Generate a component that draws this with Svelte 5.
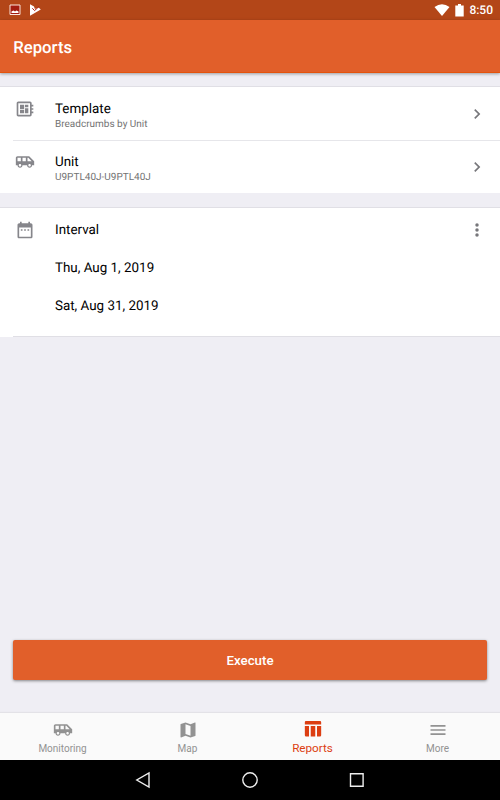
<script>
  const van = "M17 5H3c-1.1 0-2 .89-2 2v9h2c0 1.65 1.34 3 3 3s3-1.35 3-3h5.5c0 1.65 1.34 3 3 3s3-1.35 3-3H23v-5l-6-6zM3 11V7h4v4H3zm3 6.500c-.83 0-1.500-.67-1.500-1.500s.67-1.500 1.500-1.500 1.500.67 1.500 1.500-.67 1.500-1.500 1.500zm7-6.500H9V7h4v4zm4.500 6.500c-.83 0-1.500-.67-1.500-1.500s.67-1.500 1.500-1.500 1.500.67 1.500 1.500-.67 1.500-1.500 1.500zM15 11V7h1l4 4h-5z";
  const board = "M22 9V7h-2V5c0-1.1-.9-2-2-2H4c-1.1 0-2 .9-2 2v14c0 1.1.9 2 2 2h14c1.1 0 2-.9 2-2v-2h2v-2h-2v-2h2v-2h-2V9h2zm-4 10H4V5h14v14zM6 13h5v4H6zm6-6h4v3h-4zM6 7h5v5H6zm6 4h4v6h-4z";
  const calendar = "M9 11H7v2h2v-2zm4 0h-2v2h2v-2zm4 0h-2v2h2v-2zm2-7h-1V2h-2v2H8V2H6v2H5c-1.11 0-2 .9-2 2v14c0 1.1.89 2 2 2h14c1.1 0 2-.9 2-2V6c0-1.1-.9-2-2-2zm0 16H5V9h14v11z";

  const rows = [
    { title: "Template", value: "Breadcrumbs by Unit", icon: board },
    { title: "Unit", value: "U9PTL40J-U9PTL40J", icon: van },
  ];

  const dates = ["Thu, Aug 1, 2019", "Sat, Aug 31, 2019"];

  const tabs = [
    { label: "Monitoring", icon: van },
    { label: "Map", icon: "M20.5 3l-.16.03L15 5.1 9 3 3.36 4.9c-.21.07-.36.25-.36.48V20.5c0 .28.22.5.5.5l.16-.03L9 18.9l6 2.1 5.64-1.9c.21-.07.36-.25.36-.48V3.5c0-.28-.22-.5-.5-.5zM15 19l-6-2.11V5l6 2.11V19z" },
    { label: "Reports", icon: "M3.500 2.500h17q1.300 0 1.300 1.300V6.500H2.200V3.800q0-1.300 1.300-1.300zM2.200 8.500h5v12.500H3.700q-1.500 0-1.500-1.500zM9.300 8.500h5.400v12.500H9.300zM16.800 8.500h5v11q0 1.500-1.500 1.500h-3.500z" },
    { label: "More", icon: "M3 18h18v-2H3v2zm0-5h18v-2H3v2zm0-7v2h18V6H3z" },
  ];
  let active = $state("Reports");
</script>

<div class="screen">
  <div class="status">
    <svg class="photo" viewBox="0 0 12 12" width="12" height="12">
      <path d="M1 1h10v9.500H1z" fill="#a31c10" stroke="#fbe4dc" />
      <path d="M2.500 9V7.500l2-1 1.500 1L7.500 6.500l2 1V9z" fill="#fff" />
    </svg>
    <svg viewBox="0 0 12 12" width="12" height="12">
      <path d="M1 .3L5 2.500 5.800 5 9.500 3.500 11.800 5.500 1 11.700z" fill="#fff" />
      <path d="M3.300 4.300l2.300 2.300L10 2.500" fill="none" stroke="#b01c10" />
    </svg>
    <span class="space"></span>
    <svg class="wifi" viewBox="0 0 16 12" width="16" height="12">
      <path d="M.5 3Q8-2.500 15.500 3L8 12z" fill="#fff" />
    </svg>
    <svg class="battery" viewBox="0 0 9 13" width="9" height="13">
      <path d="M.3 1.500H3V0h3v1.500h2.700v11H.3z" fill="#fff" />
    </svg>
    <span class="time">8:50</span>
  </div>

  <header><h1>Reports</h1></header>

  <main>
    <section>
      {#each rows as row}
        <div class="row">
          <svg class="icon" viewBox="0 0 24 24"><path d={row.icon} /></svg>
          <div class="text">
            <div class="title">{row.title}</div>
            <div class="value">{row.value}</div>
          </div>
          <svg class="icon arrow" viewBox="0 0 24 24">
            <path d="M8.600 16.600L13.200 12 8.600 7.400 10 6l6 6-6 6z" />
          </svg>
        </div>
      {/each}
    </section>

    <section class="interval">
      <div class="line">
        <svg class="icon" viewBox="0 0 24 24"><path d={calendar} /></svg>
        <span class="title">Interval</span>
        <svg class="icon dots" viewBox="0 0 24 24">
          <circle cx="12" cy="6" r="2.100" />
          <circle cx="12" cy="12" r="2.100" />
          <circle cx="12" cy="18" r="2.100" />
        </svg>
      </div>
      {#each dates as date}
        <div class="line date">{date}</div>
      {/each}
      <div class="end"></div>
    </section>

    <button class="execute">Execute</button>
  </main>

  <nav>
    {#each tabs as tab}
      <button class="tab" class:active={tab.label === active} onclick={() => (active = tab.label)}>
        <svg class="icon" viewBox="0 0 24 24"><path d={tab.icon} /></svg>
        <span>{tab.label}</span>
      </button>
    {/each}
  </nav>

  <div class="system">
    <svg viewBox="0 0 20 20"><path d="M16 3v14L3.800 10z" /></svg>
    <svg viewBox="0 0 20 20"><circle cx="10" cy="10" r="7.200" /></svg>
    <svg viewBox="0 0 20 20"><path d="M3.500 3.700h12.600v12.600H3.500z" /></svg>
  </div>
</div>

<style>
  :global(body) {
    margin: 0;
  }

  .screen {
    width: 500px;
    height: 800px;
    display: flex;
    flex-direction: column;
    overflow: hidden;
    background: #efeef4;
    font-family: Roboto, sans-serif;
    text-rendering: geometricPrecision;
    color: #000;
  }

  svg {
    display: block;
    flex: none;
  }

  .status {
    height: 20px;
    box-sizing: border-box;
    padding: 0 7px 0 9px;
    display: flex;
    align-items: center;
    background: #b34618;
  }

  .photo {
    margin-right: 8px;
  }

  .space {
    flex: 1;
  }

  .wifi {
    margin-right: 5px;
  }

  .battery {
    margin-right: 5px;
  }

  .time {
    color: #fff;
    font-size: 12px;
    font-weight: 500;
    line-height: 20px;
  }

  header {
    height: 53px;
    box-sizing: border-box;
    padding-left: 13.3px;
    display: flex;
    align-items: center;
    background: #e15f2a;
    border-bottom: 1px solid #e4530c;
    box-shadow: 0 1px 3px rgba(0, 0, 0, 0.35);
  }

  h1 {
    margin: 4px 0 0;
    color: #fff;
    font-size: 16.7px;
    font-weight: 500;
  }

  main {
    flex: 1;
    display: flex;
    flex-direction: column;
    padding-top: 13px;
  }

  section {
    background: #fff;
    border-top: 1px solid #e0dfe5;
  }

  .row {
    height: 53px;
    display: flex;
    align-items: flex-start;
    padding: 0 13px 0 15px;
  }

  .row + .row {
    height: 52px;
    margin-left: 13px;
    padding-left: 2px;
    border-top: 1px solid #e6e6ea;
  }

  .icon {
    width: 20px;
    height: 20px;
    fill: #86868b;
  }

  .row .icon {
    margin-top: 12px;
  }

  .row .arrow {
    margin-top: 17px;
    fill: #77777b;
  }

  .row + .row .icon {
    margin-top: 11px;
  }

  .row + .row .arrow {
    margin-top: 16px;
  }

  .text {
    flex: 1;
    padding: 15px 0 0 20px;
  }

  .row + .row .text {
    padding-top: 14px;
  }

  .title,
  .date {
    font-size: 13.4px;
    line-height: 16px;
  }

  .value {
    font-size: 10px;
    line-height: 14px;
    color: #737373;
  }

  .interval {
    height: 129px;
    display: flex;
    flex-direction: column;
    margin-top: 14px;
  }

  .line {
    height: 38px;
    display: flex;
    align-items: center;
    padding: 0 13px 0 15px;
  }

  .line:first-child {
    padding-top: 3px;
  }

  .line .title {
    flex: 1;
    padding-top: 1px;
    padding-left: 20px;
  }

  .line.date {
    padding-left: 55px;
  }

  .line:first-child + .date {
    margin-top: 1px;
  }

  .end {
    height: 1px;
    margin: auto 0 0 13px;
    background: #e0dfe5;
  }

  .dots {
    fill: #77777b;
  }

  .execute {
    height: 40px;
    margin: auto 13px 33px;
    border: 0;
    border-radius: 2px;
    background: #e15f2a;
    box-shadow: 0 1px 3px rgba(0, 0, 0, 0.45);
    color: #fff;
    font: 500 13.3px Roboto, sans-serif;
  }

  nav {
    height: 47px;
    box-sizing: border-box;
    display: flex;
    background: #fafafa;
    box-shadow: 0 -1px 1px #e3e2e7;
  }

  .tab {
    flex: 1;
    display: flex;
    flex-direction: column;
    align-items: center;
    justify-content: flex-start;
    padding: 7px 0 0;
    border: 0;
    background: none;
    color: #929292;
    font: 10px/18px Roboto, sans-serif;
  }

  .tab .icon {
    fill: #929292;
  }

  .tab.active {
    padding-top: 6px;
    color: #dc3e12;
    font-size: 11.7px;
  }

  .tab.active .icon {
    fill: #dc3e12;
  }

  .system {
    height: 40px;
    display: flex;
    align-items: center;
    justify-content: center;
    gap: 87px;
    background: #000;
  }

  .system svg {
    width: 20px;
    height: 20px;
    fill: none;
    stroke: #eee;
    stroke-width: 1.4;
  }
</style>
